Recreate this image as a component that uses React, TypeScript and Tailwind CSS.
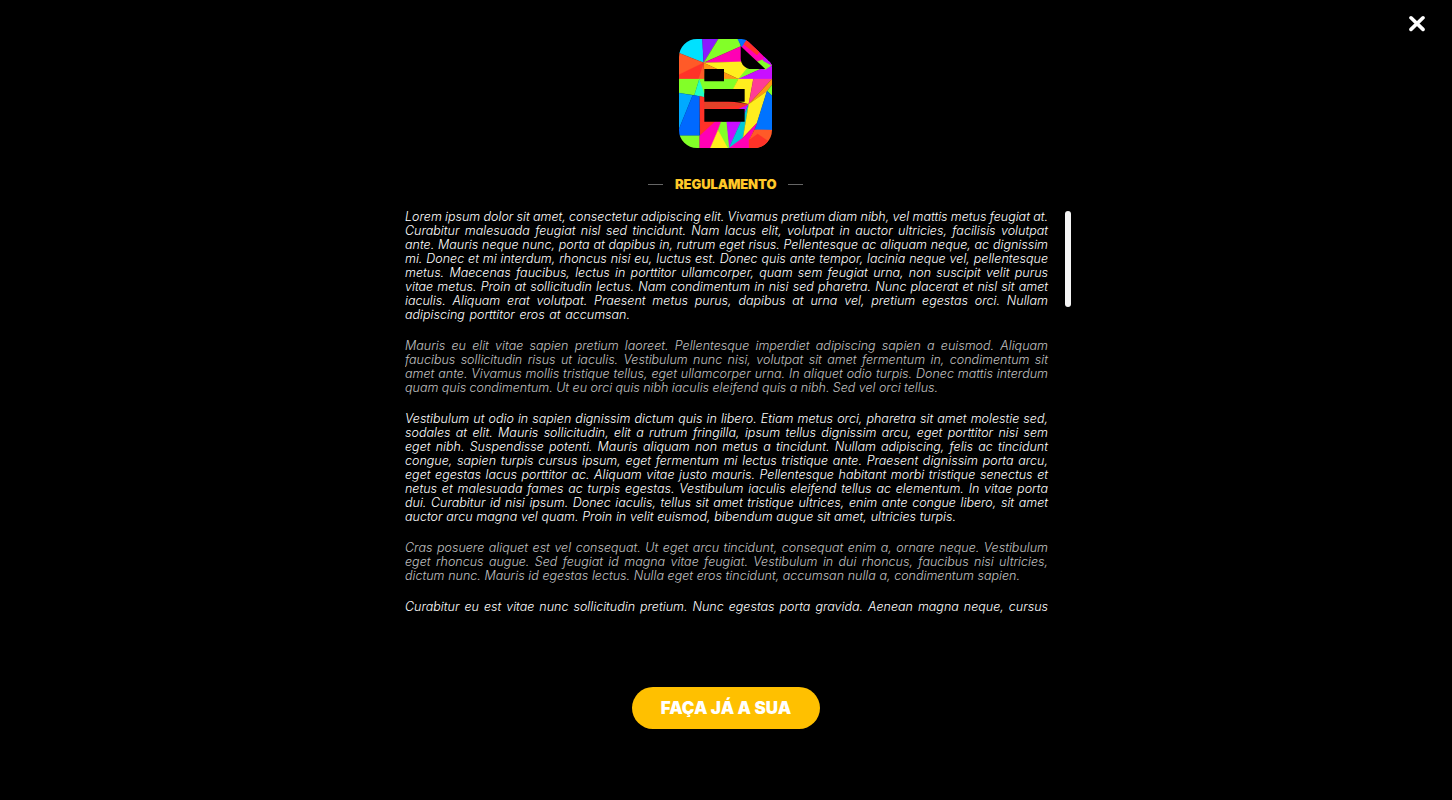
type Line = [text: string, width?: number];

const paragraphs: { dim?: boolean; lines: Line[] }[] = [
  {
    lines: [
      ["Lorem ipsum dolor sit amet, consectetur adipiscing elit. Vivamus pretium diam nibh, vel mattis metus feugiat at."],
      ["Curabitur malesuada feugiat nisl sed tincidunt. Nam lacus elit, volutpat in auctor ultricies, facilisis volutpat"],
      ["ante. Mauris neque nunc, porta at dapibus in, rutrum eget risus. Pellentesque ac aliquam neque, ac dignissim"],
      ["mi. Donec et mi interdum, rhoncus nisi eu, luctus est. Donec quis ante tempor, lacinia neque vel, pellentesque"],
      ["metus. Maecenas faucibus, lectus in porttitor ullamcorper, quam sem feugiat urna, non suscipit velit purus"],
      ["vitae metus. Proin at sollicitudin lectus. Nam condimentum in nisi sed pharetra. Nunc placerat et nisl sit amet"],
      ["iaculis. Aliquam erat volutpat. Praesent metus purus, dapibus at urna vel, pretium egestas orci. Nullam"],
      ["adipiscing porttitor eros at accumsan.", 225],
    ],
  },
  {
    dim: true,
    lines: [
      ["Mauris eu elit vitae sapien pretium laoreet. Pellentesque imperdiet adipiscing sapien a euismod. Aliquam"],
      ["faucibus sollicitudin risus ut iaculis. Vestibulum nunc nisi, volutpat sit amet fermentum in, condimentum sit"],
      ["amet ante. Vivamus mollis tristique tellus, eget ullamcorper urna. In aliquet odio turpis. Donec mattis interdum"],
      ["quam quis condimentum. Ut eu orci quis nibh iaculis eleifend quis a nibh. Sed vel orci tellus.", 533],
    ],
  },
  {
    lines: [
      ["Vestibulum ut odio in sapien dignissim dictum quis in libero. Etiam metus orci, pharetra sit amet molestie sed,"],
      ["sodales at elit. Mauris sollicitudin, elit a rutrum fringilla, ipsum tellus dignissim arcu, eget porttitor nisi sem"],
      ["eget nibh. Suspendisse potenti. Mauris aliquam non metus a tincidunt. Nullam adipiscing, felis ac tincidunt"],
      ["congue, sapien turpis cursus ipsum, eget fermentum mi lectus tristique ante. Praesent dignissim porta arcu,"],
      ["eget egestas lacus porttitor ac. Aliquam vitae justo mauris. Pellentesque habitant morbi tristique senectus et"],
      ["netus et malesuada fames ac turpis egestas. Vestibulum iaculis eleifend tellus ac elementum. In vitae porta"],
      ["dui. Curabitur id nisi ipsum. Donec iaculis, tellus sit amet tristique ultrices, enim ante congue libero, sit amet"],
      ["auctor arcu magna vel quam. Proin in velit euismod, bibendum augue sit amet, ultricies turpis.", 551],
    ],
  },
  {
    dim: true,
    lines: [
      ["Cras posuere aliquet est vel consequat. Ut eget arcu tincidunt, consequat enim a, ornare neque. Vestibulum"],
      ["eget rhoncus augue. Sed feugiat id magna vitae feugiat. Vestibulum in dui rhoncus, faucibus nisi ultricies,"],
      ["dictum nunc. Mauris id egestas lectus. Nulla eget eros tincidunt, accumsan nulla a, condimentum sapien.", 615],
    ],
  },
  {
    lines: [["Curabitur eu est vitae nunc sollicitudin pretium. Nunc egestas porta gravida. Aenean magna neque, cursus"]],
  },
];

const facets: [color: string, points: string][] = [
  ["#00e1ff", "12,12 82,12 86,83 12,54"],
  ["#8c19ff", "82,12 130,12 86,83"],
  ["#82ff28", "130,12 190,12 198,34 86,83"],
  ["#ff00b4", "86,83 198,34 235,80"],
  ["#ffee1e", "86,83 250,79 225,115 190,132"],
  ["#ff9614", "86,83 190,132 88,132"],
  ["#ff5a28", "12,54 86,83 88,132 12,132"],
  ["#ff3228", "12,119 86,83 70,132 12,132"],
  ["#82ff28", "190,132 216,100 257,102"],
  ["#c80fff", "190,132 257,102 291,70 291,132"],
  ["#ff00b4", "198,34 217,12 280,74 252,90"],
  ["#0073ff", "188,12 217,12 200,36"],
  ["#ff3228", "217,12 254,50 246,60 206,28"],
  ["#82ff28", "246,80 262,74 291,90 270,104"],
  ["#c80fff", "264,77 268,62 295,88 291,92"],
  ["#82ff28", "12,132 73,132 58,181 12,174"],
  ["#1effc8", "73,132 88,160 88,187 58,181"],
  ["#82ff28", "73,132 190,132 170,175 88,175"],
  ["#ffee1e", "190,132 235,132 221,208 160,190"],
  ["#ff3c96", "235,132 291,132 221,208"],
  ["#ff9614", "291,132 291,150 276,168 221,208"],
  ["#82ff28", "291,150 291,182 276,168"],
  ["#ff3228", "73,183 88,187 221,208 137,262 75,302"],
  ["#e14128", "88,200 221,208 88,222"],
  ["#00aaff", "12,174 53,181 12,282"],
  ["#0069ff", "53,181 73,184 74,302 12,302 12,282"],
  ["#82ff28", "12,302 74,302 74,339 12,339"],
  ["#ff00b4", "74,302 120,260 140,260 108,339 74,339"],
  ["#82ff28", "138,260 156,260 164,339 150,339 129,285"],
  ["#ffee1e", "129,285 158,339 106,339"],
  ["#c80fff", "155,260 155,240 221,208 163,339"],
  ["#00c8d7", "221,208 204,308 182,339 162,339"],
  ["#ffee1e", "221,208 276,168 246,264 204,308"],
  ["#0073ff", "276,168 291,182 291,288 238,284 246,264"],
  ["#ff00b4", "246,264 238,284 225,312 228,339 162,339 204,308"],
  ["#ff5a28", "238,284 291,285 291,339 228,339 222,315"],
  ["#ff3228", "222,315 248,297 285,322 250,345 222,339"],
];

function RulesIcon() {
  return (
    <svg className="h-[109px] w-[93px]" viewBox="12 12 279 327" aria-hidden="true">
      <defs>
        <clipPath id="sheet">
          <path d="M66 12H200Q212 12 221 21L285 82Q291 88 291 98V285A54 54 0 0 1 237 339H66A54 54 0 0 1 12 285V66A54 54 0 0 1 66 12Z" />
        </clipPath>
      </defs>
      <g clipPath="url(#sheet)">
        {facets.map(([color, points]) => (
          <polygon key={points} points={points} fill={color} stroke={color} strokeWidth="0.8" />
        ))}
      </g>
      <path d="M197 34L271 102H229A32 32 0 0 1 197 70Z" />
      <path d="M88 102H147V139H88ZM88 162H209V200H88ZM88 222H209V260H88Z" />
    </svg>
  );
}

export default function App() {
  return (
    <main className="relative flex h-[800px] w-full flex-col items-center overflow-hidden bg-black pt-[39px] font-['Inter',sans-serif]">
      <button aria-label="Fechar" className="absolute top-[15px] right-[27px]">
        <svg className="h-[17px] w-4" viewBox="0 0 16 17" fill="none" stroke="#fff" strokeWidth="3.6" strokeLinecap="round">
          <path d="M2 2.8L14 14.4M14 2.8L2 14.4" />
        </svg>
      </button>

      <div className="mr-px"><RulesIcon /></div>

      <header className="mt-[26px] mr-px flex h-5 items-center gap-3">
        <span className="h-px w-[15px] bg-[#666]" />
        <h1 className="w-[101px] text-center text-[13px] leading-5 font-black tracking-[-0.1px] whitespace-nowrap text-[#ffc828]">REGULAMENTO</h1>
        <span className="h-px w-[15px] bg-[#666]" />
      </header>

      <section className="mt-4 ml-6 flex h-[406px] w-[666px] justify-between overflow-hidden">
        <div className="flex w-[643px] flex-col gap-[17px] text-[12.5px] leading-[14px] font-[350] tracking-[0.01px] italic [word-spacing:-1.8px]">
          {paragraphs.map((p, i) => (
            <div key={i} className={p.dim ? "text-[#c0c0c0]" : "text-white"}>
              {p.lines.map(([text, width]) => (
                <p key={text} className="h-[14px] whitespace-nowrap [text-align-last:justify]" style={{ width: width ?? 643 }}>
                  {text}
                </p>
              ))}
            </div>
          ))}
        </div>
        <div className="mt-px h-24 w-1.5 rounded-full bg-[#f5f5f5]" />
      </section>

      <button className="mt-[71px] h-[42px] w-[188px] rounded-full bg-[#ffc000] text-[17px] leading-[42px] font-black tracking-normal whitespace-nowrap text-white">
        FAÇA JÁ A SUA
      </button>
    </main>
  );
}
